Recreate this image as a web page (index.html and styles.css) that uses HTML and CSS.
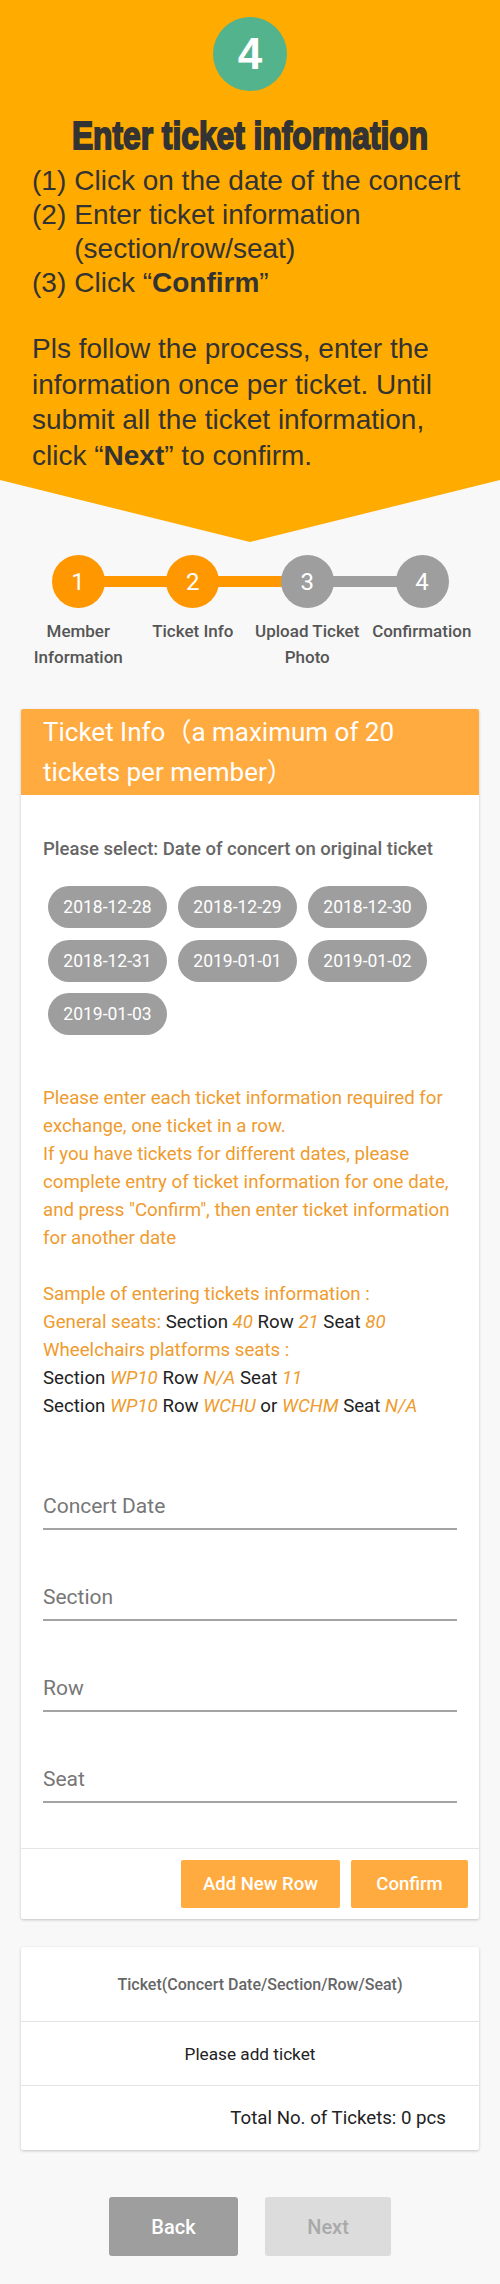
FILE: index.html
```html
<!DOCTYPE html>
<html lang="en">
<head>
<meta charset="utf-8">
<title>Enter ticket information</title>
<link rel="stylesheet" href="styles.css">
</head>
<body>
<header class="hero">
  <div class="badge">4</div>
  <h1 class="hero-title">Enter ticket information</h1>
  <ol class="hero-list">
    <li><span class="num">(1)</span><span>Click on the date of the concert</span></li>
    <li><span class="num">(2)</span><span>Enter ticket information<br>(section/row/seat)</span></li>
    <li><span class="num">(3)</span><span>Click “<b>Confirm</b>”</span></li>
  </ol>
  <p class="hero-note">Pls follow the process, enter the<br>information once per ticket. Until<br>submit all the ticket information,<br>click “<b>Next</b>” to confirm.</p>
</header>

<main class="page">
  <section class="stepper">
    <div class="track">
      <span class="dot on">1</span><span class="bar on"></span>
      <span class="dot on">2</span><span class="bar on"></span>
      <span class="dot">3</span><span class="bar"></span>
      <span class="dot">4</span>
    </div>
    <div class="step-labels">
      <span>Member<br>Information</span>
      <span>Ticket Info</span>
      <span>Upload Ticket<br>Photo</span>
      <span>Confirmation</span>
    </div>
  </section>

  <section class="card">
    <div class="card-head">Ticket Info（a maximum of 20 tickets per member）</div>
    <div class="card-body">
      <p class="select-title">Please select: Date of concert on original ticket</p>
      <div class="chips">
        <span class="chip">2018-12-28</span>
        <span class="chip">2018-12-29</span>
        <span class="chip">2018-12-30</span>
        <span class="chip">2018-12-31</span>
        <span class="chip">2019-01-01</span>
        <span class="chip">2019-01-02</span>
        <span class="chip">2019-01-03</span>
      </div>
      <div class="notice">
        <p>Please enter each ticket information required for exchange, one ticket in a row.<br>If you have tickets for different dates, please complete entry of ticket information for one date, and press "Confirm", then enter ticket information for another date</p>
        <p>Sample of entering tickets information :<br>
        General seats: <span class="k">Section</span> <i>40</i> <span class="k">Row</span> <i>21</i> <span class="k">Seat</span> <i>80</i><br>
        Wheelchairs platforms seats :<br>
        <span class="k">Section</span> <i>WP10</i> <span class="k">Row</span> <i>N/A</i> <span class="k">Seat</span> <i>11</i><br>
        <span class="k">Section</span> <i>WP10</i> <span class="k">Row</span> <i>WCHU</i> <span class="k">or</span> <i>WCHM</i> <span class="k">Seat</span> <i>N/A</i></p>
      </div>
      <div class="fields">
        <div class="field">Concert Date</div>
        <div class="field">Section</div>
        <div class="field">Row</div>
        <div class="field">Seat</div>
      </div>
    </div>
    <div class="card-foot">
      <button class="btn-orange btn-add">Add New Row</button>
      <button class="btn-orange btn-confirm">Confirm</button>
    </div>
  </section>

  <section class="card summary">
    <div class="sum-head">Ticket(Concert Date/Section/Row/Seat)</div>
    <div class="sum-empty">Please add ticket</div>
    <div class="sum-total">Total No. of Tickets: 0 pcs</div>
  </section>

  <nav class="actions">
    <button class="btn-back">Back</button>
    <button class="btn-next">Next</button>
  </nav>
</main>
</body>
</html>
```

FILE: styles.css
```css
* { box-sizing: border-box; }
html, body { margin: 0; padding: 0; }
body {
  background: #f8f8f8;
  font-family: Roboto, "Noto Sans CJK SC", sans-serif;
  width: 500px;
}

/* ---------- hero ---------- */
.hero {
  height: 542px;
  background: #ffab00;
  clip-path: polygon(0 0, 100% 0, 100% 480px, 50% 100%, 0 480px);
  padding: 17px 32px 0;
  color: #333;
  font-family: "Liberation Sans", Arial, sans-serif;
}
.badge {
  width: 74px;
  height: 74px;
  margin: 0 auto;
  border-radius: 50%;
  background: #52b38c;
  color: #fff;
  font-size: 44px;
  font-weight: 700;
  display: flex;
  align-items: center;
  justify-content: center;
}
.hero-title {
  margin: 25px 0 0;
  text-align: center;
  font-family: "Liberation Sans", Arial, sans-serif;
  font-weight: 700;
  font-size: 38px;
  line-height: 40px;
  color: #333;
  -webkit-text-stroke: 1.8px #333;
  transform: scaleX(0.835);
  white-space: nowrap;
}
.hero-list {
  list-style: none;
  margin: 8px 0 0;
  padding: 0;
  font-size: 28px;
  line-height: 34px;
}
.hero-list li { display: flex; gap: 8px; }
.hero-list b, .hero-note b { font-weight: 700; }
.hero-note {
  margin: 31px 0 0;
  font-size: 28px;
  line-height: 35.5px;
  white-space: nowrap;
}

/* ---------- page ---------- */
.page { padding: 0 21px 26px; }

.stepper { padding-top: 13px; }
.track {
  width: 397px;
  margin: 0 auto;
  display: flex;
  align-items: center;
}
.dot {
  position: relative;
  z-index: 1;
  flex: none;
  width: 53px;
  height: 53px;
  border-radius: 50%;
  background: #9e9e9e;
  color: #fff;
  font-size: 24px;
  display: flex;
  align-items: center;
  justify-content: center;
}
.dot.on { background: #ff9800; }
.bar {
  flex: 1;
  height: 11px;
  margin: 0 -4px;
  background: #9e9e9e;
}
.bar.on { background: #ff9800; }
.step-labels {
  margin-top: 10px;
  display: grid;
  grid-template-columns: repeat(4, 1fr);
  text-align: center;
  font-size: 17px;
  font-weight: 500;
  line-height: 26px;
  color: #555;
}
.step-labels span { white-space: nowrap; }

/* ---------- card ---------- */
.card {
  margin-top: 39px;
  background: #fff;
  border-radius: 2px;
  box-shadow: 0 1px 3px rgba(0,0,0,0.22);
  overflow: hidden;
}
.card-head {
  background: #ffab40;
  color: #fff;
  font-size: 26px;
  line-height: 40px;
  padding: 3px 40px 3px 22px;
}
.card-body { padding: 43px 22px 45px; }
.select-title {
  margin: 0;
  font-size: 18.5px;
  font-weight: 500;
  line-height: 22px;
  color: #666;
  white-space: nowrap;
}
.chips {
  margin-top: 26px;
  padding-left: 5px;
  display: flex;
  flex-wrap: wrap;
  gap: 11.5px 11px;
}
.chip {
  width: 119px;
  height: 42px;
  border-radius: 21px;
  background: #9e9e9e;
  color: #fff;
  font-size: 17.5px;
  display: flex;
  align-items: center;
  justify-content: center;
}
.notice {
  margin-top: 49px;
  color: #ef9b2d;
  font-size: 18.67px;
  line-height: 28px;
}
.notice p { margin: 0; }
.notice p + p { margin-top: 28px; }
.notice .k { color: #222; }
.notice i { font-style: italic; }

.fields {
  margin-top: 73px;
  display: flex;
  flex-direction: column;
  gap: 54px;
}
.field {
  font-size: 21px;
  line-height: 26px;
  color: #777;
  padding-bottom: 9px;
  border-bottom: 2px solid #a4a4a4;
}

.card-foot {
  border-top: 1px solid #e6e6e6;
  padding: 11px;
  display: flex;
  justify-content: flex-end;
  gap: 11px;
}
.btn-orange {
  height: 48px;
  border: 0;
  border-radius: 2px;
  background: #ffab40;
  color: #fff;
  font-family: Roboto, sans-serif;
  font-size: 18.5px;
  font-weight: 500;
  padding: 0;
}
.btn-add { width: 159px; }
.btn-confirm { width: 117px; }

/* ---------- summary ---------- */
.card.summary { margin-top: 28px; }
.sum-head {
  height: 75px;
  display: flex;
  align-items: center;
  justify-content: center;
  padding-left: 20px;
  font-size: 16px;
  font-weight: 500;
  color: #666;
  border-bottom: 1px solid #e4e4e4;
}
.sum-empty {
  height: 64px;
  display: flex;
  align-items: center;
  justify-content: center;
  font-size: 17.2px;
  color: #222;
  border-bottom: 1px solid #e4e4e4;
}
.sum-total {
  height: 64px;
  display: flex;
  align-items: center;
  justify-content: flex-end;
  padding-right: 33px;
  font-size: 18.67px;
  color: #222;
}

/* ---------- actions ---------- */
.actions {
  margin-top: 47px;
  display: flex;
  justify-content: center;
  gap: 27px;
}
.actions button {
  height: 59px;
  border: 0;
  border-radius: 3px;
  font-family: Roboto, sans-serif;
  font-size: 20px;
  font-weight: 500;
}
.btn-back { width: 129px; background: #9e9e9e; color: #fff; }
.btn-next { width: 126px; background: #dcdcdc; color: #a9a9a9; }
```
